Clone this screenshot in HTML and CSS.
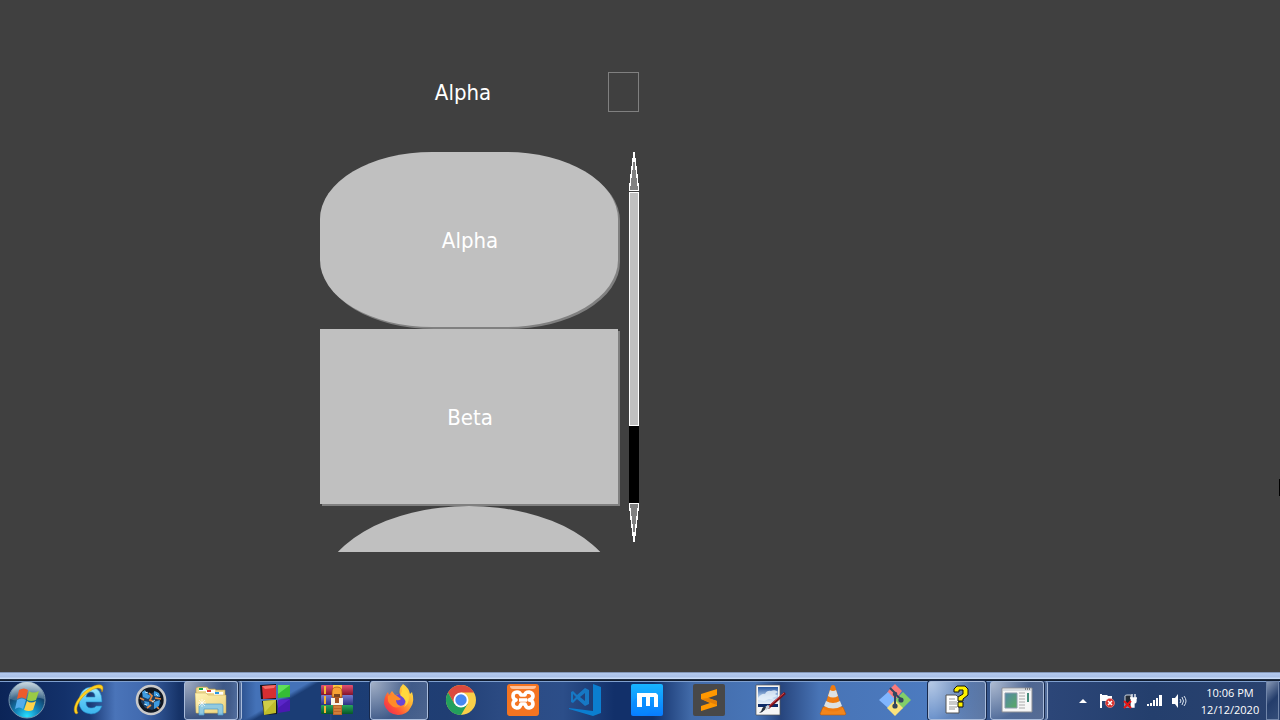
FILE: index.html
```html
<!DOCTYPE html>
<html lang="en">
<head>
    <meta charset="UTF-8" />
    <meta name="viewport" content="width=device-width, initial-scale=1.0"/>
    <title>Alpha</title>
    <link rel="stylesheet" href="styles.css">
</head>
<body>

<!-- Drop-down list with its own scroll bar -->
<main class="screen">
    <div class="dropdown">
        <div class="selected">
            <span class="selected-text">Alpha</span>
            <button class="toggle" type="button" aria-label="Open list"></button>
        </div>
        <div class="options">
            <div class="list">
                <button class="option rounded" type="button">Alpha</button>
                <button class="option" type="button">Beta</button>
                <button class="option ellipse" type="button" aria-label="Gamma"></button>
            </div>
            <div class="scrollbar">
                <button class="arrow" type="button" aria-label="Scroll up">
                    <svg viewBox="0 0 10 39" shape-rendering="crispEdges"><path fill="#fff" d="M4 0h2v6h1v8h1v8h1v9h1v8H0v-8h1v-9h1v-8h1V6h1z"/><path fill="#808080" d="M4 10h2v8h1v8h1v8h1v4H1v-4h1v-8h1v-8h1z"/></svg>
                </button>
                <div class="track"><div class="thumb"></div></div>
                <button class="arrow" type="button" aria-label="Scroll down">
                    <svg viewBox="0 0 10 39" shape-rendering="crispEdges"><path fill="#fff" d="M0 0h10v8H9v9H8v8H7v8H6v6H4v-6H3v-8H2v-8H1V8H0z"/><path fill="#808080" d="M1 1h8v4H8v8H7v8H6v8H4v-8H3v-8H2V5H1z"/></svg>
                </button>
            </div>
        </div>
    </div>
    <div class="edge-mark"></div>
</main>

<!-- Taskbar -->
<footer class="taskbar">
    <button class="start" type="button" aria-label="Start">
        <svg width="38" height="38" viewBox="0 0 38 38">
            <defs>
                <radialGradient id="orb" cx=".5" cy=".95" r=".9"><stop offset="0" stop-color="#27e0ff"/><stop offset=".35" stop-color="#1487bd"/><stop offset=".7" stop-color="#12446f"/><stop offset="1" stop-color="#7590a8"/></radialGradient>
                <linearGradient id="shine" x2="0" y2="1"><stop offset="0" stop-color="#dce8ee" stop-opacity=".8"/><stop offset="1" stop-color="#9ab8c8" stop-opacity=".25"/></linearGradient>
            </defs>
            <circle cx="19" cy="19" r="18" fill="url(#orb)" stroke="#7795ad"/>
            <path d="M2 18a17 17 0 0 1 34 0q-8-3-17 0t-17 0z" fill="url(#shine)"/>
            <path d="M11 9q5-3 9 0l-2 9q-4-3-9 0z" fill="#ed5b2c"/>
            <path d="M21 10q4 3 10 0l-3 9q-5 2-9 0z" fill="#9acb45"/>
            <path d="M9 19q5-3 9 0l-3 9q-4-3-8 0z" fill="#55adec"/>
            <path d="M19 20q4 3 9 0l-3 9q-4 2-9 0z" fill="#ffd34a"/>
        </svg>
    </button>
    <nav class="apps">
        <button class="app" type="button" aria-label="Internet Explorer">
            <svg viewBox="0 0 32 32">
                <defs><linearGradient id="ie" x2="0" y2="1"><stop offset="0" stop-color="#a5ebff"/><stop offset=".5" stop-color="#5bc8f6"/><stop offset="1" stop-color="#3cb4ec"/></linearGradient></defs>
                <path d="M29 18H13q0 6 5 6 4 0 5-2h6q-3 8-11 8-12-1-12-13Q7 4 18 3q11 1 11 15zM13 13h9q0-5-4-5t-5 5z" fill="url(#ie)" fill-rule="evenodd" stroke="#2087c5" stroke-width=".6"/>
                <path d="M3 30C-2 26 4 13 14 6 22 0 30-1 30 4q0 2-1 4 0-4-4-4-5 0-12 6C5 17 2 25 5 29z" fill="#ffd21f" stroke="#c88c0a" stroke-width=".5"/>
            </svg>
        </button>
        <button class="app" type="button" aria-label="Shovel Knight">
            <svg viewBox="0 0 32 32">
                <circle cx="16" cy="16" r="14" fill="#101721" stroke="#c9c9c9" stroke-width="2.6"/>
                <path d="M7 11l5-4 3 3 6-3 5 5-3 2 3 5-4 5-5 2-7-2-4-6z" fill="#1b3c60"/>
                <path d="M7 8l3-2 2 4 4 2-3 3-5-2zM19 7l5 2 1 4-6-1zM9 17l5 1 1 5-4-1zM19 18l6-2-1 6-5 3z" fill="#3e9be0"/>
                <path d="M14 9l3 3-2 4 4 2M5 14l4 2M20 14l6 1M12 24l4-3M22 23l2 2" stroke="#e58a42" stroke-width="1.7" fill="none"/>
                <path d="M10 8l3 1M21 10l2 2M17 18l3-2M9 20l3 1" stroke="#bfe7fb" fill="none"/>
            </svg>
        </button>
        <button class="app running stacked" type="button" aria-label="Windows Explorer">
            <svg viewBox="0 0 32 32">
                <defs><linearGradient id="folder" x2="1" y2="1"><stop offset="0" stop-color="#fff3b5"/><stop offset="1" stop-color="#ecd27b"/></linearGradient></defs>
                <path d="M1 8V4l2-1h9l2 2h6l1 1h9v23H2z" fill="#efdb92" stroke="#b7984c" stroke-width=".6"/>
                <path d="M4 4h7v3H4z" fill="#fff"/><path d="M4 4h4v2H4z" fill="#14aa43"/>
                <path d="M11 6h9v3h-9z" fill="#fff"/><path d="M12 6h4v2h-4z" fill="#dc4136"/>
                <path d="M19 8h9v3h-9z" fill="#fff"/><path d="M20 8h4v2h-4z" fill="#2898e5"/>
                <path d="M0 9h11l2 2h18v18H1z" fill="url(#folder)" stroke="#c2a758" stroke-width=".5"/>
                <path d="M4 31V22q0-2 2-2h20q2 0 2 2v9h-5v-6H9v6z" fill="#86c8e8" fill-opacity=".9" stroke="#4c9aca" stroke-width=".7"/>
                <path d="M3 19h8M7 15v8M4 16l6 6M10 16l-6 6" stroke="#fff" stroke-width=".7"/>
            </svg>
        </button>
        <button class="app" type="button" aria-label="Color blocks">
            <svg viewBox="0 0 32 32">
                <path d="M1 1l16-1v15H2zM3 17l15-1v14L5 31z" fill="#14131b"/>
                <path d="M3 2l14-1v13L4 15z" fill="#d52e32"/><path d="M3 2l14-1-2 3-9 1z" fill="#f56c65"/>
                <path d="M19 1h12v12l-12 1z" fill="#35bd35"/><path d="M19 1h12l-12 9z" fill="#5fdf59"/>
                <path d="M4 17l13-1v13L5 31z" fill="#bebd2b"/><path d="M4 17l13-1-11 12z" fill="#d0ce48"/>
                <path d="M19 16l12-1v12l-12 2z" fill="#4a19b2"/><path d="M19 16l12-1-12 9z" fill="#5a25c8"/>
            </svg>
        </button>
        <button class="app" type="button" aria-label="WinRAR">
            <svg viewBox="0 0 32 32">
                <defs>
                    <linearGradient id="bookr" x2="0" y2="1"><stop offset="0" stop-color="#e35273"/><stop offset="1" stop-color="#84142c"/></linearGradient>
                    <linearGradient id="bookb" x2="0" y2="1"><stop offset="0" stop-color="#767cce"/><stop offset="1" stop-color="#2c3182"/></linearGradient>
                    <linearGradient id="bookg" x2="0" y2="1"><stop offset="0" stop-color="#28a55c"/><stop offset="1" stop-color="#075728"/></linearGradient>
                </defs>
                <rect y="1" width="32" height="10" rx="1" fill="url(#bookr)"/><rect y="11" width="32" height="10" rx="1" fill="url(#bookb)"/><rect y="21" width="32" height="9" rx="1" fill="url(#bookg)"/>
                <path d="M4 2v8M4 12v8M4 22v7" stroke="#f5b735" stroke-width="2"/>
                <path d="M12 1h9v30h-9z" fill="#ba642b"/><path d="M12 1h9v5h-9z" fill="#ffc842"/>
                <path d="M11 8q0-5 5-5t5 5v5H11z" fill="#f7a235" stroke="#a44f13" stroke-width=".7"/><path d="M13 10h6v3h-6z" fill="#7d4520"/>
                <path d="M10 14h12v7H10z" fill="#f8f4e8"/><path d="M14 14h4v5h-4z" fill="#a45224"/>
                <path d="M13 23h7M13 26h7M13 29h7" stroke="#e69a4c"/>
            </svg>
        </button>
        <button class="app running" type="button" aria-label="Firefox">
            <svg viewBox="0 0 32 32">
                <defs><linearGradient id="fox" x1="1" x2="0" y2="1"><stop offset="0" stop-color="#fff44f"/><stop offset=".4" stop-color="#ffac31"/><stop offset=".7" stop-color="#ff5235"/><stop offset="1" stop-color="#e51d65"/></linearGradient></defs>
                <path d="M20 0q6 4 7 10l2-2q3 9-1 15-4 8-13 8Q4 30 1 20q0-8 4-12l1 3 3-4 3 4q3-1 5 0Q15 5 20 0z" fill="url(#fox)"/>
                <circle cx="17" cy="16" r="6" fill="#6947d5"/>
                <path d="M5 12q4-2 9 0l4 3q-2 2-5 1 0 5 5 6-6 4-11-2-3-3-2-8z" fill="#ff8b29"/>
                <path d="M17 11q3-4 2-9 7 5 7 11 0 7-5 10 5-6-4-12z" fill="#ffd83d"/>
            </svg>
        </button>
        <button class="app" type="button" aria-label="Chrome">
            <svg viewBox="0 0 32 32">
                <circle cx="16" cy="16" r="15" fill="#f9cf49"/>
                <path d="M3 8.5A15 15 0 0 1 29 8.5H16L9.500 20z" fill="#db4a3e"/>
                <path d="M3 8.500A15 15 0 0 0 16 31l6.500-11H9.500z" fill="#23a05d"/>
                <circle cx="16" cy="16" r="7.500" fill="#fff"/><circle cx="16" cy="16" r="5.700" fill="#4688f1"/>
            </svg>
        </button>
        <button class="app" type="button" aria-label="XAMPP">
            <svg viewBox="0 0 32 32">
                <rect width="32" height="32" rx="3" fill="#f47421"/><path d="M3 2h26q0 3-3 3H6Q3 5 3 2z" fill="#ffc19a"/>
                <path d="M12 16h8M14 11q-1-3-4-3-4 0-4 4 0 3 3 4-3 1-3 4t4 4q3 0 4-4h4q1 4 4 4 4-1 4-4 0-4-4-4 4-1 4-4t-4-4q-4 0-4 3z" fill="none" stroke="#fff" stroke-width="3.600" stroke-linejoin="round"/>
            </svg>
        </button>
        <button class="app" type="button" aria-label="Visual Studio Code">
            <svg viewBox="0 0 32 32">
                <path d="M24 0l8 3v26l-8 3L0 25v-1l24 3z" fill="#0b7ed0"/>
                <path fill-rule="evenodd" d="M16 4l4 2v14l-4 2-8-7-4 4-2-1V8l2-1 4 4zM16 9l-5 4 5 4zM4 10v6l3-3z" fill="#1678c4"/>
            </svg>
        </button>
        <button class="app" type="button" aria-label="Maxthon">
            <svg viewBox="0 0 32 32">
                <defs><linearGradient id="max" x2="0" y2="1"><stop offset="0" stop-color="#17b4ff"/><stop offset="1" stop-color="#087bff"/></linearGradient></defs>
                <rect width="32" height="32" rx="2" fill="url(#max)"/><circle cx="11" cy="22" r="10" fill="#078aff" fill-opacity=".45"/>
                <path d="M6 9h19l2 2v12h-4V13h-4v9h-4v-9h-4v10H6z" fill="#fff"/>
            </svg>
        </button>
        <button class="app" type="button" aria-label="Sublime Text">
            <svg viewBox="0 0 32 32">
                <rect width="32" height="32" rx="2" fill="#484848"/>
                <path d="M24 5v6l-9 3 9 3v5L8 27v-5l9-3-9-4v-5z" fill="#ff9800"/><path d="M8 15l16 6v-4l-9-3z" fill="#e37f06"/>
            </svg>
        </button>
        <button class="app" type="button" aria-label="Image editor">
            <svg viewBox="0 0 32 32">
                <defs><linearGradient id="sky" x2="0" y2="1"><stop offset="0" stop-color="#24549f"/><stop offset=".6" stop-color="#b9d2ee"/><stop offset="1" stop-color="#e6eef7"/></linearGradient></defs>
                <path d="M1 1h24v30H1z" fill="#f6f6f6" stroke="#555" stroke-width=".7"/>
                <path d="M3 3h20v17H3z" fill="url(#sky)"/>
                <path d="M3 14q4-5 7-4 2-4 6-3 4-2 7 1l-3 2 3 2-6 2 4 2-7-1-5 2-6-1z" fill="#eaf2fa" fill-opacity=".8"/><path d="M3 20h20v3H3z" fill="#0d2a66"/>
                <path d="M30 9L13 24" stroke="#7b1018" stroke-width="2.600"/><path d="M29 9L14 22" stroke="#d34c51"/>
                <path d="M14 22l-4 3" stroke="#c8d1d8" stroke-width="3"/><path d="M11 23q-1 5-7 6 3-2 3-4 1-3 4-2z" fill="#29313d"/>
            </svg>
        </button>
        <button class="app" type="button" aria-label="VLC">
            <svg viewBox="0 0 32 32">
                <path d="M6 23h20l3 7-1 1H4l-1-1z" fill="#f1851c" stroke="#bd5b08" stroke-width=".6"/>
                <path d="M14 2q2-2 4 0l7 23q-9 5-18 0z" fill="#ef7b10"/>
                <path d="M13 6q3 2 6 0l2 6q-5 3-10 0zM9 17q7 4 14 0l2 5q-9 5-18 0z" fill="#dce1e3"/>
            </svg>
        </button>
        <button class="app" type="button" aria-label="Git">
            <svg viewBox="0 0 32 32">
                <path d="M16 0l7 7-7 9-8-7 2-3z" fill="#fa7b7b"/><path d="M9 8l8 8-8 8-9-8z" fill="#80b6ff"/>
                <path d="M24 8l8 8-9 9-7-9z" fill="#82cf68"/><path d="M16 16l8 8-8 8-8-8z" fill="#fae27c"/>
                <path d="M11 4l5 5v14M16 10l7 6" fill="none" stroke="#34465e" stroke-width="2"/><circle cx="16" cy="10" r="2.300" fill="#34465e"/><circle cx="22" cy="16" r="2.600" fill="#34465e"/><circle cx="16" cy="22" r="2.600" fill="#34465e"/>
            </svg>
        </button>
        <button class="app running" type="button" aria-label="Help">
            <svg viewBox="0 0 32 32">
                <path d="M5 11h10l3 3v15H5z" fill="#fff" stroke="#555"/><path d="M8 15h6M8 18h8M8 20h8M8 23h8M8 25h6" stroke="#999"/>
                <path d="M13 8V5l3-3h8l3 3v6l-5 4v2h-5v-4l5-3V6h-4v2z" fill="#fff200" stroke="#111"/><path d="M17 18h5v5h-5z" fill="#fff200" stroke="#111"/>
            </svg>
        </button>
        <button class="app running stacked" type="button" aria-label="Program window">
            <svg viewBox="0 0 32 32">
                <defs><linearGradient id="win" x2="1" y2="1"><stop offset="0" stop-color="#5487a8"/><stop offset="1" stop-color="#58ab61"/></linearGradient></defs>
                <path d="M1 4h30v24H1z" fill="#f6f6f6" stroke="#8a8d94"/><path d="M2 5h28v2H2z" fill="#d9dde1"/><path d="M24 5h1M26 5h1M28 5h1" stroke="#333"/>
                <path d="M4 9h12v15H4z" fill="url(#win)" stroke="#8c9bad"/><path d="M18 9h6M18 12h6M18 15h6M18 18h6M18 21h6M18 24h6" stroke="#aaa"/><path d="M26 9h2v9h-2z" fill="#458c7b"/>
            </svg>
        </button>
    </nav>
    <div class="tray">
        <button class="tray-icon" type="button" aria-label="Show hidden icons"><svg viewBox="0 0 16 16"><path d="M4 10l4-4 4 4z" fill="#fff"/></svg></button>
        <button class="tray-icon" type="button" aria-label="Action Center"><svg viewBox="0 0 16 16"><path d="M1 1h2v14H1zM3 2h5l1 1h4v6H8L7 8H3z" fill="#fff"/><circle cx="11" cy="10" r="4.500" fill="#d9302c" stroke="#f1a19b" stroke-width=".6"/><path d="M9 8l4 4M13 8l-4 4" stroke="#fff" stroke-width="1.500"/></svg></button>
        <button class="tray-icon" type="button" aria-label="Power"><svg viewBox="0 0 16 16"><path d="M2 3q0-1 2-1h4v12H2z" fill="#252c38" stroke="#cfd6df"/><path d="M9 1v4M12 1v4M7 5h7M8 6h5v2q0 2-2 2v4H8" fill="#fff" stroke="#fff" stroke-width="1.300"/><path d="M1 8l7 7M8 8l-7 7" stroke="#e91414" stroke-width="2"/></svg></button>
        <button class="tray-icon" type="button" aria-label="Network"><svg viewBox="0 0 16 16"><path d="M0 11h2v2H0zM3 10h2v3H3zM6 7h2v6H6zM9 5h2v8H9zM12 2h3v11h-3z" fill="#fff"/></svg></button>
        <button class="tray-icon" type="button" aria-label="Volume"><svg viewBox="0 0 16 16"><path d="M1 5h3l3-4v14l-3-4H1z" fill="#fff"/><path d="M9 6q2 2 0 4M11 4q3 4 0 8M13 3q4 5 0 10" fill="none" stroke="#dbe3ee"/></svg></button>
        <button class="clock" type="button"><span>10:06 PM</span><span>12/12/2020</span></button>
        <button class="show-desktop" type="button" aria-label="Show desktop"></button>
    </div>
</footer>

</body>
</html>
```

FILE: styles.css
```css
* {
    box-sizing: border-box;
    margin: 0;
    padding: 0;
}

body {
    display: flex;
    flex-direction: column;
    min-height: 100vh;
    background: #404040;
    color: #fff;
    font-family: "DejaVu Sans Condensed", "Noto Sans", Tahoma, sans-serif;
}

button {
    border: none;
    background: none;
    color: inherit;
    font: inherit;
}

svg {
    display: block;
}

/* Main area */
.screen {
    position: relative;
    flex: 1;
    padding-top: 72px;
}

.dropdown {
    width: 25%;
    margin-left: 25%;
    font-size: 22px;
}

.selected {
    display: flex;
    height: 40px;
    margin-bottom: 40px;
    padding-right: 1px;
}

.selected-text {
    flex: 1;
    padding-right: 2px;
    line-height: 42px;
    text-align: center;
}

.toggle {
    width: 31px;
    border: 1px solid #808080;
}

.options {
    display: flex;
    justify-content: space-between;
    height: 400px;
    padding-right: 1px;
}

.list {
    display: flex;
    flex-direction: column;
    flex: 1;
    gap: 2px;
    margin-right: 9px;
    padding-right: 2px;
    overflow: hidden;
}

.option {
    flex: none;
    height: 175px;
    padding: 2px 0 0 2px;
    background: #c0c0c0;
    box-shadow: 2px 2px #808080;
}
.option.rounded {
    border-radius: 112px / 67px;
}
.option.ellipse {
    border-radius: 50%;
}

/* Scroll bar */
.scrollbar {
    display: flex;
    flex-direction: column;
    width: 10px;
    height: 390px;
}

.arrow {
    height: 39px;
}

.track {
    flex: 1;
    background: #000;
}

.thumb {
    height: 75%;
    background: #c0c0c0;
    border: 1px solid #fff;
    box-shadow: 0 -1px #404040;
    margin-top: 1px;
}

.edge-mark {
    position: absolute;
    top: 479px;
    right: 0;
    width: 1px;
    height: 17px;
    background: #000;
}

/* Taskbar */
.taskbar {
    display: flex;
    height: 48px;
    padding-top: 9px;
    background:
        linear-gradient(#8397b8 1px, #b3c9ee 1px, #a8bfe7 5px, #c9dcf8 6px, #c9dcf8 7px, #27354a 7px, #081326 9px, #7f9fce 9px, #7f9fce 10px, transparent 10px),
        linear-gradient(150deg, transparent 50%, #1b3d75 56%) 240px 0 / 90px 100% no-repeat,
        linear-gradient(90deg, #0b2457 0, #13316a 5%, #1a3a76 7%, #4a74b9 9%, #426bb0 11%, #163368 14%, #1c3c74 18%, #4472b8 20%, #4472b8 25%, #1b3d75 26%, #203e73 35%, #2b4a82 39%, #2c4e89 44%, #12306a 48%, #12306a 51%, #426ba9 54%, #4875b7 59%, #27457d 61%, #4874b6 64%, #4c7bc0 73%, #36578e 77%, #2c4678 82%, #243f6d 90%, #2a426f 100%);
}

.start {
    display: flex;
    justify-content: center;
    width: 54px;
    margin-right: 4px;
}

.apps {
    display: flex;
    flex: 1;
}

.app {
    display: flex;
    justify-content: center;
    width: 58px;
    height: 39px;
    margin: 0 2px;
    padding-top: 3px;
    border-radius: 3px;
}
.app svg {
    width: 32px;
    height: 32px;
}
.app.running {
    padding-top: 2px;
    background: radial-gradient(circle at 0 0, rgba(255,255,255,0.6), rgba(255,255,255,0.15) 60%, rgba(255,255,255,0.2));
    border: 1px solid #a9bcdb;
    box-shadow: 0 0 0 1px #17294c;
}

/* A second window behind the button */
.app.stacked {
    width: 54px;
    margin-right: 6px;
    box-shadow: 1px 0 #17294c, 3px 0 #526d9b, 4px 0 #a9bcdb;
}

/* Tray and clock */
.tray {
    display: flex;
    align-items: center;
    gap: 8px;
}

.tray-icon {
    width: 16px;
    height: 16px;
}

.clock {
    display: flex;
    flex-direction: column;
    width: 70px;
    font: 11px/17px "Open Sans", "Noto Sans", sans-serif;
}

.show-desktop {
    width: 13px;
    height: 39px;
    margin: 0 1px 0 -7px;
    border: 1px solid #7186aa;
    background: linear-gradient(135deg, #8798b5, #243d6b 50%, #344d79);
}
```
